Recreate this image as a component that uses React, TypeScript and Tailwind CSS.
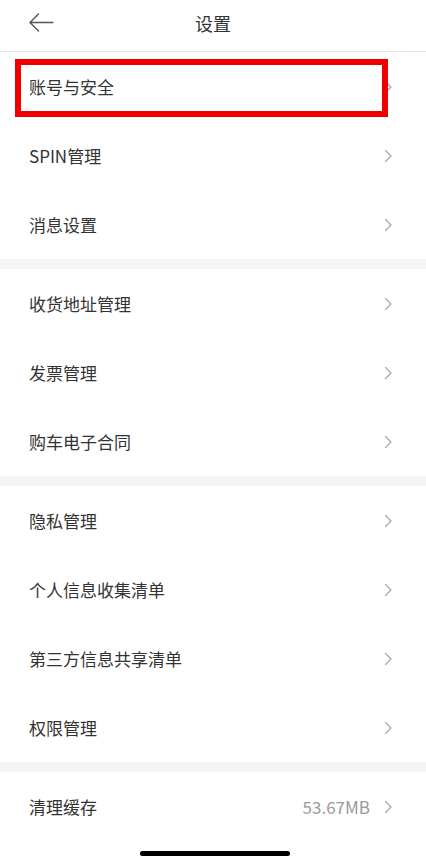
import React from "react";

const Chevron = () => (
  <svg width="9" height="14" viewBox="0 0 9 14" fill="none" className="shrink-0">
    <path d="M1.5 1.5 L7 7 L1.5 12.5" stroke="#a8a8a8" strokeWidth="1.3" strokeLinecap="round" strokeLinejoin="round" />
  </svg>
);

const Row = ({ label, value }: { label: string; value?: string }) => (
  <div className="flex h-[69px] items-center justify-between pl-[29px] pr-[33px]">
    <span className="text-[17px] text-[#333333]">{label}</span>
    <div className="flex items-center gap-[14px]">
      {value && <span className="text-[17px] text-[#9a9a9a]">{value}</span>}
      <Chevron />
    </div>
  </div>
);

const Section = ({ items }: { items: { label: string; value?: string }[] }) => (
  <div className="bg-white">
    {items.map((it) => (
      <Row key={it.label} {...it} />
    ))}
  </div>
);

export default function App() {
  return (
    <div
      className="relative flex h-[862px] w-[426px] flex-col overflow-hidden bg-[#f4f4f4]"
      style={{ fontFamily: '"PingFang SC", "Noto Sans CJK SC", "Noto Sans", sans-serif' }}
    >
      <div className="relative flex h-[52px] shrink-0 items-center justify-center border-b border-[#e6e6e6] bg-white pb-[4px]">
        <svg className="absolute left-[28px] top-[12px]" width="26" height="21" viewBox="0 0 26 21" fill="none">
          <path d="M25 10.5 H2 M10.5 2 L2 10.5 L10.5 19" stroke="#555" strokeWidth="1.4" strokeLinecap="round" strokeLinejoin="round" />
        </svg>
        <span className="text-[18px] text-[#333333]">设置</span>
      </div>
      <div className="flex flex-col gap-[10px]">
        <Section items={[{ label: "账号与安全" }, { label: "SPIN管理" }, { label: "消息设置" }]} />
        <Section items={[{ label: "收货地址管理" }, { label: "发票管理" }, { label: "购车电子合同" }]} />
        <Section
          items={[
            { label: "隐私管理" },
            { label: "个人信息收集清单" },
            { label: "第三方信息共享清单" },
            { label: "权限管理" },
          ]}
        />
      </div>
      <div className="mt-[10px] flex-1 bg-white">
        <Row label="清理缓存" value="53.67MB" />
      </div>
      <div className="absolute left-[15px] top-[59px] h-[58px] w-[373px] border-[6px] border-[#ee0000]" />
      <div className="absolute bottom-[6px] left-[140px] h-[5px] w-[150px] rounded-full bg-black" />
    </div>
  );
}
